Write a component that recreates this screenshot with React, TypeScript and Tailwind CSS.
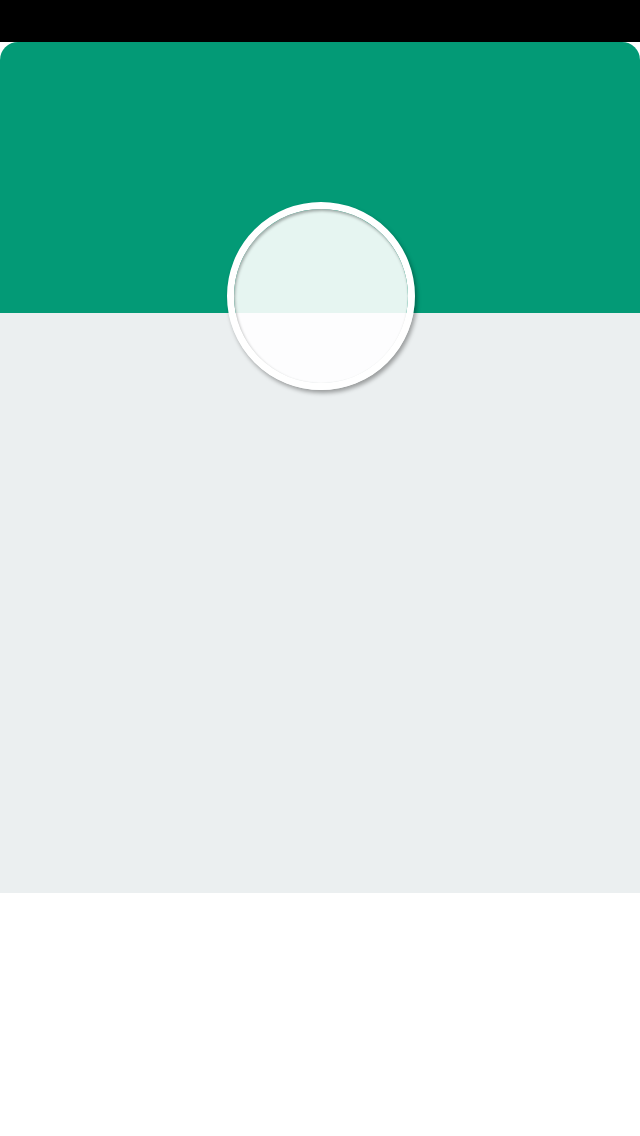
const App = () => {
  return (
    <div className="min-h-[1136px] w-full bg-white flex flex-col">
      <div className="h-[42px] bg-black" />
      <div className="relative flex flex-col">
        <div className="h-[271px] bg-[#039a76] rounded-t-[18px]" />
        <div className="h-[580px] bg-[#ebeff0]" />
        {/* magnifier ring */}
        <div className="absolute left-[227px] top-[160px] w-[188px] h-[188px] rounded-full border-[7px] border-white shadow-[2px_3px_4px_rgba(0,0,0,0.35)]">
          <div className="w-full h-full rounded-full bg-white/90 shadow-[inset_1px_2px_3px_rgba(0,0,0,0.3)]" />
        </div>
      </div>
    </div>
  );
};
export default App;
